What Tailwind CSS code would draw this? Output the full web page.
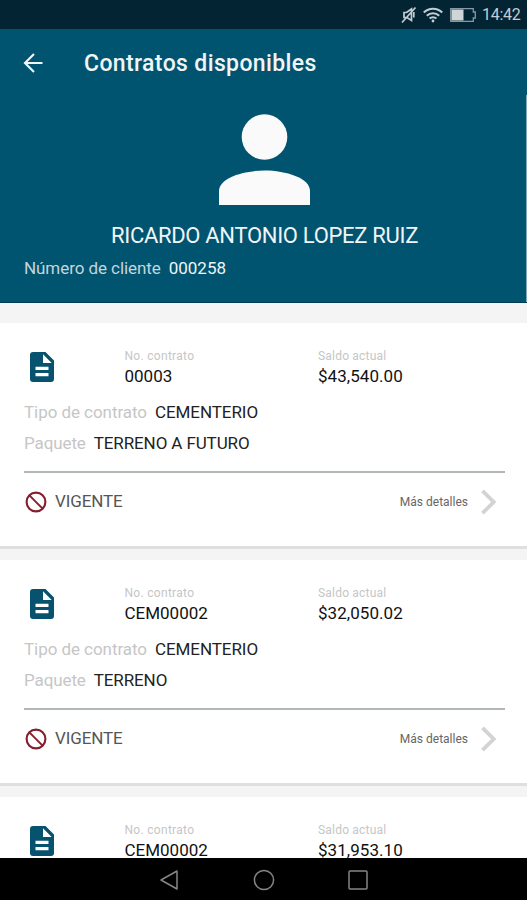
<!DOCTYPE html>
<html lang="es">
<head>
<meta charset="utf-8">
<title>Contratos disponibles</title>
<script src="https://cdn.jsdelivr.net/npm/@tailwindcss/browser@4"></script>
</head>
<body class="font-[Roboto,sans-serif]">
<svg class="hidden">
  <symbol id="doc" viewBox="0 0 24 30"><path fill-rule="evenodd" d="M3 0H15.500L24 8.500V27a3 3 0 0 1-3 3H3a3 3 0 0 1-3-3V3a3 3 0 0 1 3-3ZM13 2.300V11h8.700ZM5.500 14.800v3.100h13v-3.100ZM5.500 21v3.200h13V21Z"/></symbol>
  <symbol id="ban" viewBox="0 0 22 22"><circle cx="11" cy="11" r="9.400" fill="none" stroke="currentColor" stroke-width="2.100"/><path d="M4.400 4.400 17.600 17.600" stroke="currentColor" stroke-width="2"/></symbol>
  <symbol id="chevron" viewBox="0 0 16 26"><path d="M1.500 1.800 12.700 13 1.500 24.200" fill="none" stroke="currentColor" stroke-width="3.800"/></symbol>
</svg>
<div class="flex h-[900px] w-[527px] flex-col overflow-hidden bg-[#f4f4f4]">
  <div class="flex h-[29px] shrink-0 items-center justify-end bg-[#022433] pr-[6px] pt-[1px] text-[#c3ced4]">
    <svg class="mr-[6px] h-[18px] w-[16px]" viewBox="0 0 16 18" fill="none" stroke="currentColor" stroke-width="1.700"><path d="M3 6.500H5.500L10.500 3V14.500L6 11.500H3ZM14.500 1.500 1 16.500"/><path d="M12.800 6v5.500"/></svg>
    <svg class="mr-[7px] h-[16px] w-[20px]" viewBox="0 0 20 16" fill="none" stroke="currentColor" stroke-width="2.100"><path d="M.8 5.600a13 13 0 0 1 18.400 0M3.800 8.800a8.800 8.800 0 0 1 12.400 0M6.600 11.600a4.800 4.800 0 0 1 6.800 0"/><circle cx="10" cy="14" r="1.400" fill="currentColor" stroke="none"/></svg>
    <svg class="mr-[6px] h-[14px] w-[26px]" viewBox="0 0 26 14"><path d="M.7.7H23.300V4H25.300V10H23.300V13.300H.7Z" fill="none" stroke="#8799a3" stroke-width="1.300"/><path d="M1.500 1.500H13.500V12.500H1.500Z" fill="#ced5d9"/></svg>
    <span class="w-[39px] text-[16px] leading-[20px] tracking-[-0.300px]">14:42</span>
  </div>
  <div class="relative flex h-[274px] shrink-0 flex-col border-b border-[#003a52] bg-[#00546f] text-[#f0f5f8]">
    <div class="absolute right-0 top-[66px] h-[207px] w-px bg-[#86a9b8]"></div>
    <div class="flex h-[68px] items-center pl-[23px]">
      <svg class="h-[20px] w-[20px]" viewBox="0 0 20 20" fill="none" stroke="currentColor" stroke-width="2.200"><path d="M19.500 10H2M11 1 2 10l9 9"/></svg>
      <h1 class="ml-[41px] mt-[2px] text-[23px] font-medium leading-[30px] tracking-[0.370px]">Contratos disponibles</h1>
    </div>
    <svg class="mt-[17px] ml-[219px] h-[91px] w-[91px] shrink-0" viewBox="0 0 91 91" fill="#fafafa"><circle cx="45.500" cy="23" r="22.800"/><path d="M0 91V77C0 64 24 56.500 45.500 56.500S91 64 91 77V91Z"/></svg>
    <div class="mt-[17px] ml-[2px] text-center text-[22px] leading-[28px] tracking-[-0.310px]">RICARDO ANTONIO LOPEZ RUIZ</div>
    <div class="mt-[7px] flex gap-[8px] pl-[24px] text-[17px] leading-[22px]"><span class="tracking-[-0.070px] text-[#c4d5dd]">Número de cliente</span><span>000258</span></div>
  </div>

  <main class="mt-[20px] flex min-h-0 flex-1 flex-col gap-[14px] overflow-hidden">
    <section class="h-[223px] shrink-0 bg-white pl-[24px] pr-[22px] pt-[26px] shadow-[0_3px_0_#dfdfdf]">
      <div class="flex h-[38px]">
        <svg class="ml-[6px] mt-[3px] h-[30px] w-[24px] text-[#07526f]" fill="currentColor"><use href="#doc"/></svg>
        <div class="ml-[70.500px] w-[193.500px]"><div class="text-[12px] leading-[14px] tracking-[0.300px] text-[#c6c6c6]">No. contrato</div><div class="mt-[3px] text-[17px] leading-[20px] text-[#111]">00003</div></div>
        <div><div class="text-[12px] leading-[14px] tracking-[0.200px] text-[#c6c6c6]">Saldo actual</div><div class="mt-[3px] text-[17px] leading-[20px] tracking-[0.050px] text-[#111]">$43,540.00</div></div>
      </div>
      <div class="mt-[10px] flex h-[31px] items-center gap-[8px] text-[17px] tracking-[-0.060px]"><span class="text-[#c6c6c6]">Tipo de contrato</span><span class="text-[#222]">CEMENTERIO</span></div>
      <div class="flex h-[31px] items-center gap-[8px] text-[17px] tracking-[-0.110px]"><span class="text-[#c6c6c6]">Paquete</span><span class="text-[#222]">TERRENO A FUTURO</span></div>
      <div class="mt-[12px] h-[2px] bg-[#b1b7b9]"></div>
      <div class="flex h-[58px] items-center text-[17px]">
        <svg class="ml-[1px] h-[22px] w-[22px] text-[#82202d]"><use href="#ban"/></svg>
        <span class="ml-[8px] tracking-[-0.100px] text-[#555]">VIGENTE</span>
        <span class="ml-auto text-[12px] text-[#666]">Más detalles</span>
        <svg class="ml-[13px] mr-[8px] h-[26px] w-[16px] text-[#d3d3d3]"><use href="#chevron"/></svg>
      </div>
    </section>
    <section class="h-[223px] shrink-0 bg-white pl-[24px] pr-[22px] pt-[26px] shadow-[0_3px_0_#dfdfdf]">
      <div class="flex h-[38px]">
        <svg class="ml-[6px] mt-[3px] h-[30px] w-[24px] text-[#07526f]" fill="currentColor"><use href="#doc"/></svg>
        <div class="ml-[70.500px] w-[193.500px]"><div class="text-[12px] leading-[14px] tracking-[0.300px] text-[#c6c6c6]">No. contrato</div><div class="mt-[3px] text-[17px] leading-[20px] text-[#111]">CEM00002</div></div>
        <div><div class="text-[12px] leading-[14px] tracking-[0.200px] text-[#c6c6c6]">Saldo actual</div><div class="mt-[3px] text-[17px] leading-[20px] tracking-[0.050px] text-[#111]">$32,050.02</div></div>
      </div>
      <div class="mt-[10px] flex h-[31px] items-center gap-[8px] text-[17px] tracking-[-0.060px]"><span class="text-[#c6c6c6]">Tipo de contrato</span><span class="text-[#222]">CEMENTERIO</span></div>
      <div class="flex h-[31px] items-center gap-[8px] text-[17px] tracking-[-0.110px]"><span class="text-[#c6c6c6]">Paquete</span><span class="text-[#222]">TERRENO</span></div>
      <div class="mt-[12px] h-[2px] bg-[#b1b7b9]"></div>
      <div class="flex h-[58px] items-center text-[17px]">
        <svg class="ml-[1px] h-[22px] w-[22px] text-[#82202d]"><use href="#ban"/></svg>
        <span class="ml-[8px] tracking-[-0.100px] text-[#555]">VIGENTE</span>
        <span class="ml-auto text-[12px] text-[#666]">Más detalles</span>
        <svg class="ml-[13px] mr-[8px] h-[26px] w-[16px] text-[#d3d3d3]"><use href="#chevron"/></svg>
      </div>
    </section>
    <section class="h-[61px] shrink-0 bg-white pl-[24px] pr-[22px] pt-[26px]">
      <div class="flex h-[35px]">
        <svg class="ml-[6px] mt-[3px] h-[30px] w-[24px] text-[#07526f]" fill="currentColor"><use href="#doc"/></svg>
        <div class="ml-[70.500px] w-[193.500px]"><div class="text-[12px] leading-[14px] tracking-[0.300px] text-[#c6c6c6]">No. contrato</div><div class="mt-[3px] text-[17px] leading-[20px] text-[#111]">CEM00002</div></div>
        <div><div class="text-[12px] leading-[14px] tracking-[0.200px] text-[#c6c6c6]">Saldo actual</div><div class="mt-[3px] text-[17px] leading-[20px] tracking-[0.050px] text-[#111]">$31,953.10</div></div>
      </div>
    </section>
  </main>
  <nav class="flex h-[42px] shrink-0 items-center bg-black pl-[159px] pt-[2px] text-[#858585]">
    <svg class="h-[22px] w-[20px]" viewBox="0 0 20 22" fill="none" stroke="currentColor" stroke-width="1.500" stroke-linejoin="round"><path d="M18 2V20L2 11Z"/></svg>
    <svg class="ml-[74px] h-[22px] w-[22px]" viewBox="0 0 22 22" fill="none" stroke="currentColor" stroke-width="1.500"><circle cx="11" cy="11" r="9.600"/></svg>
    <svg class="ml-[73px] h-[20px] w-[20px]" viewBox="0 0 20 20" fill="none" stroke="currentColor" stroke-width="1.500"><rect x="1" y="1" width="18" height="18" rx="1"/></svg>
  </nav>
</div>
</body>
</html>
